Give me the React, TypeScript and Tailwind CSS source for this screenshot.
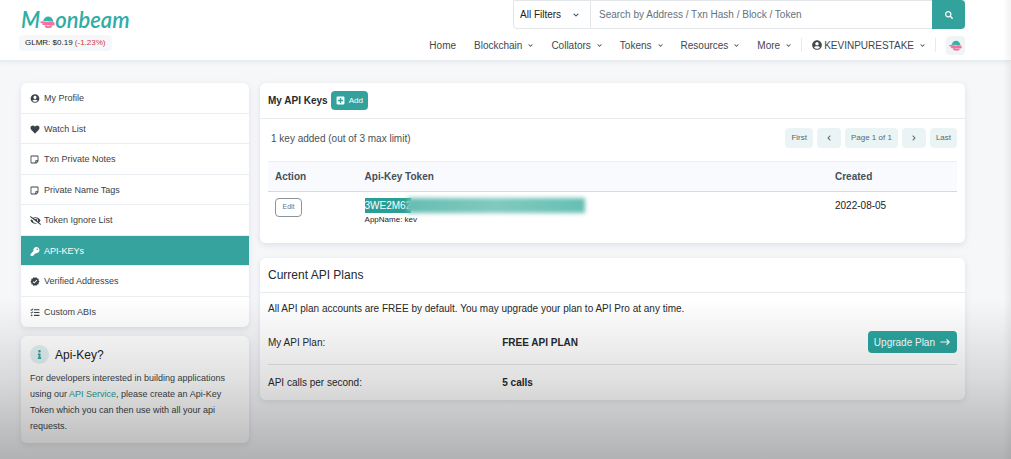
import type { ReactNode } from 'react'
import {
  FaChevronDown,
  FaChevronLeft,
  FaChevronRight,
  FaEyeSlash,
  FaHeart,
  FaInfo,
  FaKey,
  FaPlusSquare,
  FaRegStickyNote,
  FaSearch,
  FaTasks,
  FaUserCircle,
} from 'react-icons/fa'
import { MdVerified } from 'react-icons/md'
import { HiArrowNarrowRight } from 'react-icons/hi'

const sideLinks = [
  { label: 'My Profile', icon: FaUserCircle, size: 'h-[9px] w-[10px]' },
  { label: 'Watch List', icon: FaHeart, size: 'h-[9px] w-[10px]' },
  { label: 'Txn Private Notes', icon: FaRegStickyNote, size: 'h-[9px] w-[9px]' },
  { label: 'Private Name Tags', icon: FaRegStickyNote, size: 'h-[9px] w-[9px]' },
  { label: 'Token Ignore List', icon: FaEyeSlash, size: 'h-[11px] w-[11px]' },
  { label: 'API-KEYs', icon: FaKey, size: 'h-[9px] w-[10px]', active: true },
  { label: 'Verified Addresses', icon: MdVerified, size: 'h-[11px] w-[10px]' },
  { label: 'Custom ABIs', icon: FaTasks, size: 'h-[9px] w-[10px]' },
]

const navLinks = [
  { label: 'Home', menu: false },
  { label: 'Blockchain', menu: true },
  { label: 'Collators', menu: true },
  { label: 'Tokens', menu: true },
  { label: 'Resources', menu: true },
  { label: 'More', menu: true },
]

// Half sun over pink water
function MoonMark({ className }: { className: string }) {
  return (
    <svg viewBox="0 0 24 22" className={className} aria-hidden="true">
      <path d="M5 9.5C6 4.500 9 2 13 2s7.500 3 8.500 8.500z" fill="#35b3a9" />
      <path
        d="M2 11.500c5-1 8 2 12 1s5-.5 8 .5M5 14.500c4 .5 9 1 17 .5M9 18c3 1.500 6 1.500 9 .5"
        stroke="#f4709f"
        strokeWidth="3"
        strokeLinecap="round"
        fill="none"
      />
    </svg>
  )
}

function Card({ children }: { children: ReactNode }) {
  return <section className="rounded-md bg-white shadow-[0_2px_6px_rgba(140,152,164,0.22)]">{children}</section>
}

function PageButton({ children, label }: { children: ReactNode; label?: string }) {
  return (
    <button
      type="button"
      aria-label={label}
      className="flex h-5 min-w-6 items-center justify-center rounded-sm bg-[#ebf4f4] px-1.5 text-[8px] text-[#5b666b]"
    >
      {children}
    </button>
  )
}

function Header() {
  return (
    <header className="border-b border-[#e9edef] bg-white pr-[46px] pl-[21px] shadow-[0_1px_4px_rgba(140,152,164,0.15)]">
      <div className="flex h-15 justify-between">
        <div className="flex flex-col items-start pt-[5px]">
          <a href="#" aria-label="Moonbeam" className="flex h-7 items-center font-['Lato'] text-[22px] font-semibold text-[#2fada6] italic">
            <span>M</span>
            <MoonMark className="mt-1.5 h-[14px] w-[15px]" />
            <span>onbeam</span>
          </a>
          <p className="mt-[2px] -ml-0.5 rounded bg-[#f6f7f8] px-1.5 text-[8px] leading-4 whitespace-nowrap text-[#16191c]">
            GLMR: $0.19 <span className="text-[#cf3a3e]">(-1.23%)</span>
          </p>
        </div>

        <div className="flex flex-col items-end">
          <form className="flex h-[29px] w-[452px]">
            <div className="relative w-[78px] shrink-0 rounded-bl border border-[#e2e6e9]">
              <select
                aria-label="Search filter"
                className="h-full w-full appearance-none pl-1.5 text-[10px] text-[#1e2022]"
              >
                <option>All Filters</option>
              </select>
              <FaChevronDown className="pointer-events-none absolute top-[11px] right-[11px] h-1.5 w-1.5 text-[#45505a]" />
            </div>
            <input
              aria-label="Search"
              placeholder="Search by Address / Txn Hash / Block / Token"
              className="min-w-0 flex-1 border-y border-[#e2e6e9] pl-2 text-[10px] placeholder:text-[#66717c]"
            />
            <button
              type="submit"
              aria-label="Submit search"
              className="flex w-[33px] items-center justify-center rounded-r bg-[#34a29c] text-white"
            >
              <FaSearch className="h-2 w-2" />
            </button>
          </form>

          <nav className="flex flex-1 items-center gap-[18px] pt-px text-[10px] text-[#40474e]">
            {navLinks.map((link) => (
              <a key={link.label} href="#" className="flex items-center gap-1.5">
                {link.label}
                {link.menu && <FaChevronDown className="h-[5px] w-[5px]" />}
              </a>
            ))}
            <div className="-ml-2 flex items-center gap-2.5">
              <span className="h-3.5 w-px bg-[#e7eaee]" />
              <a href="#" className="flex items-center gap-0.5">
                <FaUserCircle className="h-[10px] w-[10px]" />
                KEVINPURESTAKE
                <FaChevronDown className="ml-1 h-[5px] w-[5px]" />
              </a>
              <span className="h-3.5 w-px bg-[#e7eaee]" />
              <button
                type="button"
                aria-label="Network"
                className="flex h-[19px] w-[19px] items-center justify-center rounded-sm bg-[#eff4f5]"
              >
                <MoonMark className="h-[13px] w-[13px]" />
              </button>
            </div>
          </nav>
        </div>
      </div>
    </header>
  )
}

function Sidebar() {
  return (
    <aside className="flex w-[228px] shrink-0 flex-col gap-[9px]">
      <Card>
        <nav className="grid min-h-61 auto-rows-fr divide-y divide-[#e9edf1]">
          {sideLinks.map(({ label, icon: Icon, size, active }) => (
            <a
              key={label}
              href="#"
              className={`flex items-center pt-0.5 pl-[9px] text-[9px] ${
                active ? 'bg-[#36a39f] text-white' : 'text-[#3b4248]'
              }`}
            >
              <span className="flex w-3.5">
                <Icon className={size} />
              </span>
              {label}
            </a>
          ))}
        </nav>
      </Card>
      <Card>
        <div className="py-[9px] pr-2 pl-[9px]">
          <h2 className="flex items-center gap-1.5 text-[12px] text-[#1e2022]">
            <span className="flex h-[19px] w-[19px] items-center justify-center rounded-full bg-[#e1f0f2]">
              <FaInfo className="h-[9px] w-[9px] text-[#2fa39c]" />
            </span>
            Api-Key?
          </h2>
          <p className="mt-1.5 text-[9px] leading-4 text-[#3b4248]">
            For developers interested in building applications using our{' '}
            <a href="#" className="text-[#1d9f96]">API Service</a>, please create an Api-Key Token which you can
            then use with all your api requests.
          </p>
        </div>
      </Card>
    </aside>
  )
}

function ApiKeys() {
  return (
    <Card>
      <div className="flex h-9 items-center gap-[3px] border-b border-[#e7eaee] px-2">
        <h1 className="text-[10px] font-bold text-[#25292d]">My API Keys</h1>
        <button
          type="button"
          className="flex h-[19px] items-center gap-1 rounded bg-[#34a29c] px-[5px] text-[8px] text-white"
        >
          <FaPlusSquare className="h-[9px] w-[9px]" />
          Add
        </button>
      </div>
      <div className="px-2 pt-[9px] pb-[17px]">
        <div className="flex items-center justify-between">
          <p className="pl-[3px] text-[10px] text-[#4a5157]">1 key added (out of 3 max limit)</p>
          <div className="flex gap-1">
            <PageButton>First</PageButton>
            <PageButton label="Previous page"><FaChevronLeft className="h-1.5 w-1.5" /></PageButton>
            <PageButton>Page 1 of 1</PageButton>
            <PageButton label="Next page"><FaChevronRight className="h-1.5 w-1.5" /></PageButton>
            <PageButton>Last</PageButton>
          </div>
        </div>
        <table className="mt-[13px] w-full table-fixed text-left text-[10px]">
          <thead>
            <tr className="h-[30px] border-t border-b border-t-[#eceff2] border-b-[#d5dae0] bg-[#f8fafd] text-[#45505a]">
              <th className="w-[13%] pl-[7px]">Action</th>
              <th className="pl-[7px]">Api-Key Token</th>
              <th className="w-[130px] pl-2">Created</th>
            </tr>
          </thead>
          <tbody>
            <tr className="align-top text-[#1e2022]">
              <td className="pt-1.5 pl-[7px]">
                <button
                  type="button"
                  className="h-[19px] w-[27px] rounded-sm border border-[#8b949b] text-[7px] text-[#6b757c]"
                >
                  Edit
                </button>
              </td>
              <td className="pt-1.5 pl-[7px]">
                <div className="flex h-[15px] items-center">
                  <span className="h-full bg-[#2b9f96] leading-[15px] text-white">3WE2M62</span>
                  <span className="-ml-1 h-full w-[178px] bg-linear-to-r from-[#67bdb3] via-[#80c9bf] to-[#66bfb4] blur-[2px]" />
                </div>
                <p className="text-[8px] leading-[13px]">AppName: kev</p>
              </td>
              <td className="pt-1.5 pl-2 leading-[15px]">2022-08-05</td>
            </tr>
          </tbody>
        </table>
      </div>
    </Card>
  )
}

function ApiPlans() {
  return (
    <Card>
      <h2 className="flex h-[35px] items-center border-b border-[#e7eaee] px-2 text-[12px] text-[#25292d]">
        Current API Plans
      </h2>
      <div className="px-2 pt-2 text-[10px] text-[#25292d]">
        <p className="leading-4">
          All API plan accounts are FREE by default. You may upgrade your plan to API Pro at any time.
        </p>
        <dl>
          <div className="flex items-center border-b border-[#e2e4e6] pt-[14px] pb-[11px]">
            <dt className="w-[34%]">My API Plan:</dt>
            <dd className="flex flex-1 items-center justify-between">
              <strong>FREE API PLAN</strong>
              <button
                type="button"
                className="flex h-[22px] items-center gap-1 rounded-sm bg-[#2ba59e] px-1.5 text-[10px] text-white"
              >
                Upgrade Plan
                <HiArrowNarrowRight className="h-3 w-3" />
              </button>
            </dd>
          </div>
          <div className="flex h-[35px] items-center">
            <dt className="w-[34%]">API calls per second:</dt>
            <dd className="font-bold">5 calls</dd>
          </div>
        </dl>
      </div>
    </Card>
  )
}

export default function App() {
  return (
    <div className="relative min-h-screen overflow-hidden bg-[#f5f7f9] font-['Liberation_Sans',Arial,sans-serif]">
      <Header />
      <main className="flex items-start gap-[11px] pt-[22px] pr-[46px] pb-4 pl-[21px]">
        <Sidebar />
        <div className="flex min-w-0 flex-1 flex-col gap-[15px]">
          <ApiKeys />
          <ApiPlans />
        </div>
      </main>
      {/* shade over the lower part of the page */}
      <div className="pointer-events-none absolute inset-x-0 bottom-0 h-[160px] bg-linear-to-b from-transparent via-black/12 to-black/28" />
      <div className="pointer-events-none absolute inset-y-0 right-0 w-2 bg-linear-to-r from-transparent to-black/5" />
    </div>
  )
}
